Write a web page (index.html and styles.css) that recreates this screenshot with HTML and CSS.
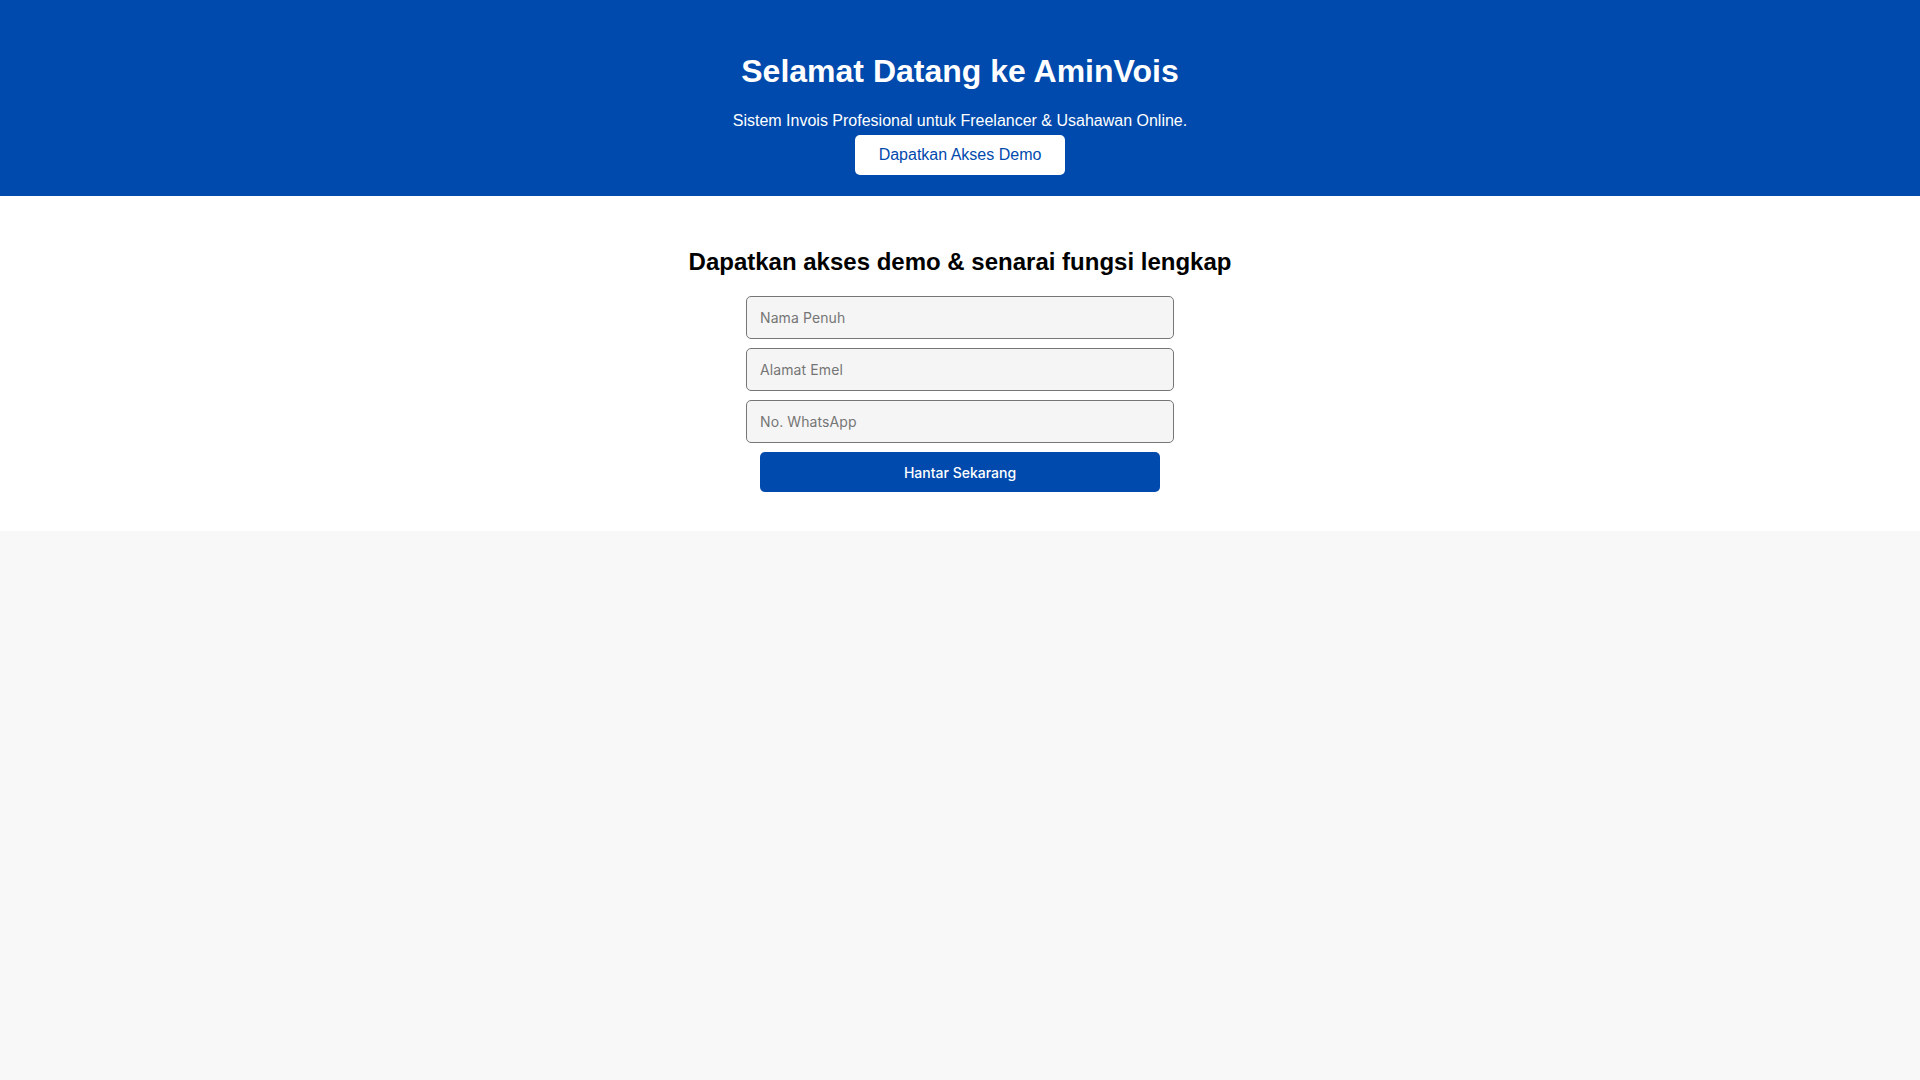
FILE: index.html
```html
<!DOCTYPE html>
<html lang="ms">
<head>
<meta charset="utf-8">
<title>AminVois</title>
<link rel="stylesheet" href="styles.css">
</head>
<body>
<header class="hero">
  <h1 class="hero-title">Selamat Datang ke AminVois</h1>
  <p class="hero-sub">Sistem Invois Profesional untuk Freelancer &amp; Usahawan Online.</p>
  <a class="hero-btn" href="#demo">Dapatkan Akses Demo</a>
</header>
<section class="demo" id="demo">
  <h2 class="demo-title">Dapatkan akses demo &amp; senarai fungsi lengkap</h2>
  <form class="demo-form">
    <input class="field" type="text" placeholder="Nama Penuh">
    <input class="field" type="email" placeholder="Alamat Emel">
    <input class="field" type="tel" placeholder="No. WhatsApp">
    <button class="submit" type="button">Hantar Sekarang</button>
  </form>
</section>
</body>
</html>
```
FILE: styles.css
```css
html, body {
  margin: 0;
  padding: 0;
}
body {
  background: #f8f8f8;
  font-family: "Liberation Sans", Arial, sans-serif;
  min-height: 100vh;
}
.hero {
  background: #004aad;
  color: #ffffff;
  text-align: center;
  padding: 53px 20px 21px;
  display: flex;
  flex-direction: column;
  align-items: center;
}
.hero-title {
  margin: 0 0 23px;
  font-size: 32px;
  font-weight: bold;
  line-height: 36px;
}
.hero-sub {
  margin: 0 0 5px;
  font-size: 16px;
  line-height: 18px;
}
.hero-btn {
  display: inline-block;
  background: #ffffff;
  color: #004aad;
  text-decoration: none;
  font-size: 16px;
  line-height: 18px;
  padding: 11px 24px;
  border-radius: 5px;
}
.demo {
  background: #ffffff;
  padding: 52px 20px 39px;
  display: flex;
  flex-direction: column;
  align-items: center;
}
.demo-title {
  margin: 0 0 20px;
  font-size: 24px;
  font-weight: bold;
  line-height: 28px;
  color: #000000;
}
.demo-form {
  display: flex;
  flex-direction: column;
  align-items: center;
  gap: 9px;
  width: 400px;
}
.field {
  box-sizing: border-box;
  width: 428px;
  height: 43px;
  padding: 12px 13px;
  border: 1px solid #767676;
  border-radius: 5px;
  background: #f5f5f5;
  font-family: Inter, "Noto Sans", sans-serif;
  font-size: 14px;
  letter-spacing: 0.1px;
  color: #333333;
}
.field::placeholder {
  color: #757575;
}
.submit {
  box-sizing: border-box;
  width: 400px;
  height: 40px;
  border: none;
  border-radius: 5px;
  background: #004aad;
  color: #ffffff;
  font-family: Inter, "Noto Sans", sans-serif;
  font-size: 14px;
  font-weight: 500;
  cursor: pointer;
}
```
